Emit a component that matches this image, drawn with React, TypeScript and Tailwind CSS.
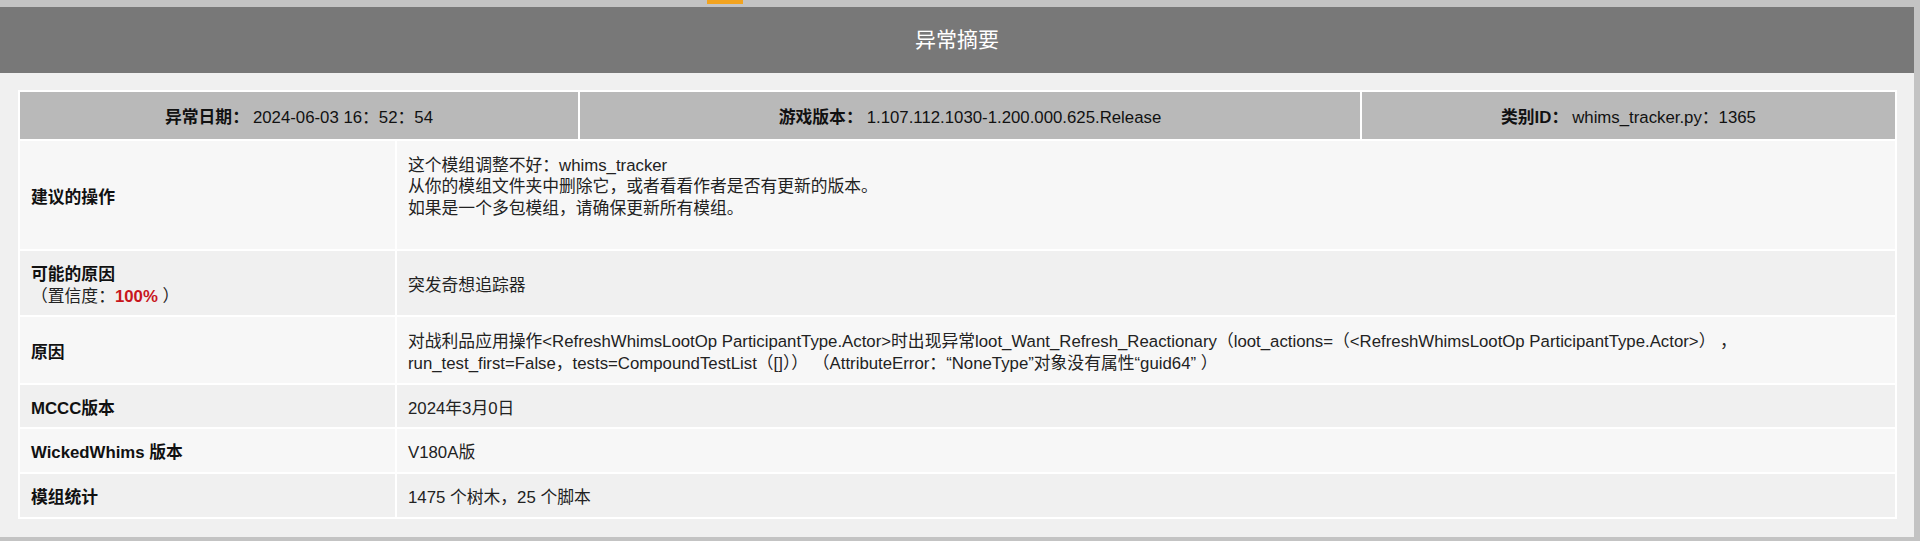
import React from 'react';

const rows = [
  { label: '建议的操作', h: 'h-[108px]', bg: 'bg-[#f7f7f7]' },
  { label: '可能的原因', h: 'h-[64px]', bg: 'bg-[#f0f0f0]' },
  { label: '原因', h: 'h-[66px]', bg: 'bg-[#f7f7f7]' },
  { label: 'MCCC版本', h: 'h-[42px]', bg: 'bg-[#f0f0f0]' },
  { label: 'WickedWhims 版本', h: 'h-[43px]', bg: 'bg-[#f7f7f7]' },
  { label: '模组统计', h: 'h-[43px]', bg: 'bg-[#f0f0f0]' },
];

const App = () => {
  const values: React.ReactNode[] = [
    <div>
      <div>这个模组调整不好：whims_tracker</div>
      <div>从你的模组文件夹中删除它，或者看看作者是否有更新的版本。</div>
      <div>如果是一个多包模组，请确保更新所有模组。</div>
      <div className="h-[21.5px]" />
    </div>,
    <div>突发奇想追踪器</div>,
    <div>
      <div>对战利品应用操作&lt;RefreshWhimsLootOp ParticipantType.Actor&gt;时出现异常loot_Want_Refresh_Reactionary（loot_actions=（&lt;RefreshWhimsLootOp ParticipantType.Actor&gt;） ，</div>
      <div>run_test_first=False，tests=CompoundTestList（[]）） （AttributeError：“NoneType”对象没有属性“guid64” ）</div>
    </div>,
    <div>2024年3月0日</div>,
    <div>V180A版</div>,
    <div>1475 个树木，25 个脚本</div>,
  ];

  return (
    <div className="relative h-[541px] w-[1920px] overflow-hidden bg-[#c3c3c3] pt-[7px] pr-[6px] pb-[4px] font-['Liberation_Sans','Noto_Sans_CJK_SC',sans-serif] text-[16.8px] leading-[21.5px]">
      {/* active tab marker */}
      <div className="absolute left-[707px] top-0 h-[4px] w-[36px] bg-[#f2a31f]" />

      <div className="flex h-full flex-col bg-[#f0f0f0]">
        <div className="flex h-[66px] items-center justify-center bg-[#787878] text-[21px] text-white">
          异常摘要
        </div>

        <div className="pt-[17px] pl-[18px] pr-[17px]">
          <div className="flex flex-col gap-[2px] bg-white p-[2px]">
            {/* summary header */}
            <div className="grid h-[47px] grid-cols-[558px_780px_1fr] gap-[2px]">
              <div className="flex items-center justify-center bg-[#b9b9b9] pt-[4px] text-[#111]">
                <span className="font-bold">异常日期：</span>
                <span className="ml-[4px]">2024-06-03 16：52：54</span>
              </div>
              <div className="flex items-center justify-center bg-[#b9b9b9] pt-[4px] text-[#111]">
                <span className="font-bold">游戏版本：</span>
                <span className="ml-[4px]">1.107.112.1030-1.200.000.625.Release</span>
              </div>
              <div className="flex items-center justify-center bg-[#b9b9b9] pt-[4px] text-[#111]">
                <span className="font-bold">类别ID：</span>
                <span className="ml-[4px]">whims_tracker.py：1365</span>
              </div>
            </div>

            {rows.map((r, i) => (
              <div key={i} className={`grid grid-cols-[375px_1fr] gap-[2px] ${r.h}`}>
                <div className={`flex items-center pt-[5px] pl-[11px] ${r.bg}`}>
                  {i === 1 ? (
                    <div>
                      <div className="font-bold text-[#111]">可能的原因</div>
                      <div className="text-[#222]">
                        （置信度：<span className="font-bold text-[#c8161d]">100%</span> ）
                      </div>
                    </div>
                  ) : (
                    <div className="font-bold text-[#111]">{r.label}</div>
                  )}
                </div>
                <div className={`flex items-center pt-[5px] pl-[11px] pr-[10px] text-[#222] ${r.bg}`}>
                  {values[i]}
                </div>
              </div>
            ))}
          </div>
        </div>
      </div>
    </div>
  );
};

export default App;
